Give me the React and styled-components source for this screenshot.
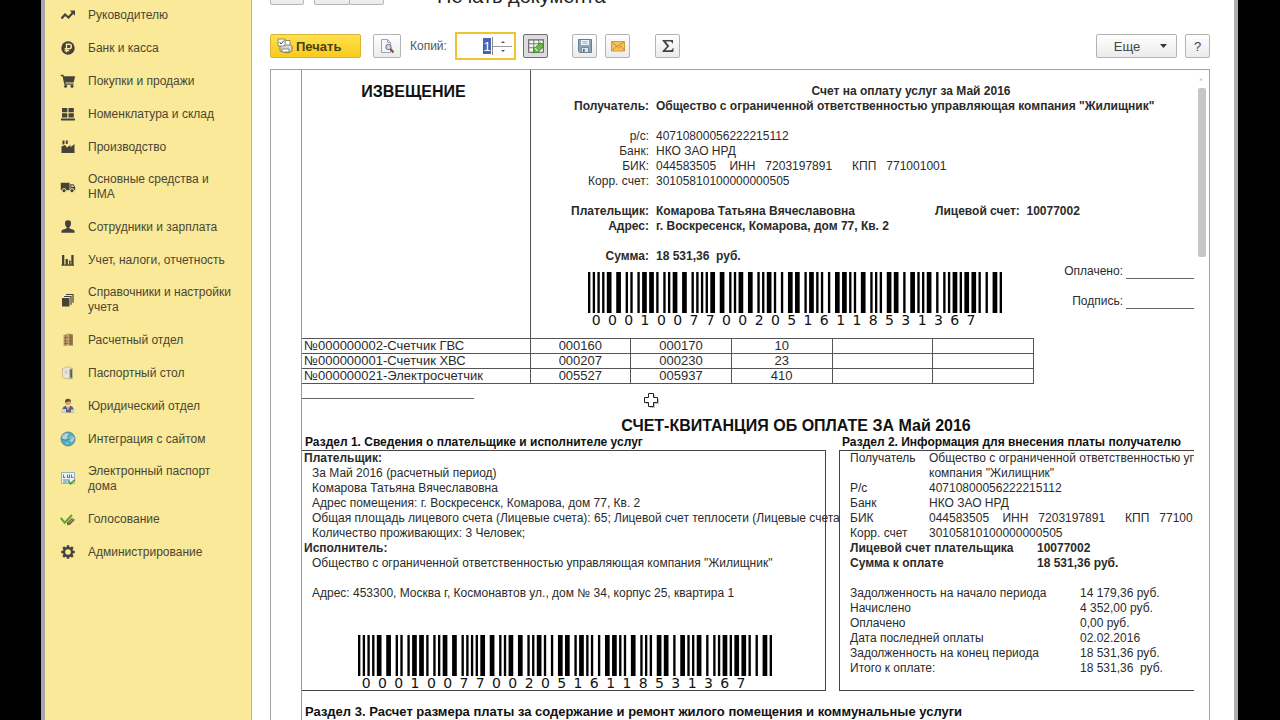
import { useState } from "react";
import styled, { createGlobalStyle, css } from "styled-components";

const GlobalStyle = createGlobalStyle`
  * {
    box-sizing: border-box;
  }
  body {
    margin: 0;
    background: #000;
    font-family: "Liberation Sans", Arial, sans-serif;
    font-size: 12px;
    color: #2b2b2b;
  }
  button, input {
    font-family: inherit;
  }
`;

const Screen = styled.div`
  height: 100vh;
  padding: 0 42px 0 41px;
  overflow: hidden;
`;

const AppWindow = styled.div`
  height: 100%;
  display: flex;
  background: #fff;
  border-left: 4px solid #a9a5ab;
  border-right: 4px solid #adadad;
  overflow: hidden;
`;

/* ---------- sidebar ---------- */

const Sidebar = styled.nav`
  flex: 0 0 207px;
  background: #f9e998;
  border-right: 1px solid #c9b76a;
`;

const MenuList = styled.ul`
  list-style: none;
  margin: -1px 0 0;
  padding: 0;
`;

const MenuLink = styled.a`
  display: flex;
  align-items: center;
  gap: 12px;
  min-height: 33px;
  padding: 8px 18px 9px 15px;
  font-size: 12px;
  line-height: 15px;
  color: #4b4634;
  text-decoration: none;

  svg {
    flex: 0 0 16px;
  }
`;

/* ---------- main pane ---------- */

const Main = styled.main`
  flex: 1;
  min-width: 0;
  display: flex;
  flex-direction: column;
  padding: 0 24px 0 18px;
`;

const TitleRow = styled.header`
  display: flex;
  align-items: center;
  height: 24px;
  margin-top: -19px;
`;

const Button = styled.button`
  display: flex;
  align-items: center;
  justify-content: center;
  width: ${(p) => p.$width || 25}px;
  height: 24px;
  padding: 0;
  border: 1px solid #b3b3b3;
  border-radius: 2px;
  background: linear-gradient(#fff, #ebebeb);
  color: #444;
  font-size: 13px;

  ${(p) => p.$primary && css`
    justify-content: flex-start;
    gap: 3px;
    padding-left: 6px;
    border-color: #d8b336;
    background: linear-gradient(#ffe04c, #f8cb1c);
    color: #4a411c;
    font-weight: bold;
  `}
  ${(p) => p.$pressed && css`
    border-color: #6f6f6f;
    background: #dcdcdc;
  `}
`;

const NavPair = styled.div`
  display: flex;
  margin-left: 10px;

  button + button {
    margin-left: -1px;
  }
`;

const Title = styled.h1`
  margin: 0 0 0 53px;
  padding-top: 6px;
  font-size: 20px;
  line-height: 24px;
  font-weight: normal;
  color: #222;
`;

const Toolbar = styled.div`
  display: flex;
  align-items: center;
  height: 28px;
  margin: 27px 0 9px;
`;

const Space = styled.span`
  flex: 0 0 ${(p) => p.$w}px;
`;

const Filler = styled.span`
  flex: 1;
`;

const CopiesLabel = styled.label`
  width: 45px;
  color: #555;
`;

const CopiesBox = styled.div`
  display: flex;
  justify-content: flex-end;
  align-items: center;
  width: 61px;
  height: 28px;
  padding-right: 2px;
  border: 2px solid #f0c52c;
  background: #fff;
`;

const CopiesInput = styled.input`
  width: 8px;
  height: 16px;
  padding: 0;
  border: 0;
  outline: 0;
  background: #4864b4;
  color: #fff;
  font-size: 13px;
  text-align: center;
`;

const Steppers = styled.div`
  display: flex;
  flex-direction: column;
  width: 20px;
  margin-left: 1px;
  border-left: 1px solid #888;
`;

const Step = styled.button`
  display: flex;
  align-items: center;
  justify-content: center;
  height: 9px;
  padding: 0;
  border: 0;
  background: none;

  & + & {
    border-top: 1px solid #999;
  }
`;

/* ---------- printed form ---------- */

const Viewer = styled.section`
  flex: 1;
  min-height: 0;
  display: flex;
  border: 1px solid #a0a0a0;
  border-bottom: 0;
`;

const Gutter = styled.div`
  flex: 0 0 30px;
`;

const Sheet = styled.article`
  position: relative;
  flex: 1;
  min-width: 0;
  border-left: 1px solid #999;
  line-height: 15px;
  white-space: nowrap;
  overflow: hidden;
`;

const ScrollTrack = styled.div`
  flex: 0 0 15px;
  padding: 7px 3px 0 4px;
`;

const ScrollThumb = styled.div`
  height: 169px;
  margin-top: 7px;
  border-radius: 2px;
  background: #c6c6c6;
`;

const Notice = styled.div`
  display: flex;
  height: 268px;
`;

const Stub = styled.div`
  flex: 0 0 229px;
  padding: 13px 5px 0 0;
  border-right: 1px solid #555;
`;

const StubTitle = styled.h2`
  margin: 0;
  font-size: 16px;
  line-height: 18px;
  text-align: center;
  color: #111;
`;

const NoticeBody = styled.div`
  flex: 1;
  padding-top: 14px;
`;

const NoticeTitle = styled.h3`
  width: 760px;
  margin: 0;
  font-size: 12px;
  line-height: 15px;
  text-align: center;
`;

const Line = styled.div`
  display: grid;
  grid-template-columns: ${(p) => p.$label}px 1fr;
  column-gap: ${(p) => p.$gap || 0}px;
  min-height: 15px;
  margin-top: ${(p) => (p.$after ? 15 : 0)}px;
  font-weight: ${(p) => (p.$bold ? "bold" : "normal")};
  white-space: pre;
`;

const RightLabel = styled.span`
  text-align: right;
`;

const Account = styled.span`
  display: inline-block;
  width: 279px;
`;

const PayRow = styled.div`
  display: flex;
  align-items: flex-start;
  padding-left: 57px;
`;

const BarcodeBox = styled.figure`
  flex: 0 0 414px;
  width: 414px;
  margin: ${(p) => p.$margin};

  svg {
    display: block;
    width: 100%;
    height: 41px;
  }
`;

const Digits = styled.figcaption`
  display: flex;
  padding-right: 23px;
  font-family: "DejaVu Sans", sans-serif;
  font-size: 14px;
  line-height: 15px;
  color: #111;

  span {
    flex: 1;
    text-align: center;
  }
`;

const Signatures = styled.div`
  margin-left: 61px;
`;

const Signature = styled.div`
  display: flex;
  height: 15px;
  margin-bottom: 15px;

  span {
    width: 60px;
    text-align: right;
  }
`;

const Blank = styled.div`
  width: ${(p) => p.$width}px;
  height: 15px;
  margin-left: ${(p) => p.$left || 0}px;
  border-bottom: 1px solid #666;
`;

const Meters = styled.table`
  width: 732px;
  table-layout: fixed;
  border-collapse: collapse;
  font-size: 13px;

  td {
    height: 15px;
    padding: 0;
    border: 1px solid #555;
    line-height: 14px;
    text-align: center;
  }
  td:first-child {
    width: 228px;
    padding-left: 2px;
    border-left: 0;
    text-align: left;
  }
`;

const BillTitle = styled.h2`
  width: 988px;
  margin: 17px 0 0;
  font-size: 16px;
  line-height: 19px;
  text-align: center;
  color: #111;
`;

const Columns = styled.div`
  display: flex;
  gap: 13px;
`;

const Part = styled.section`
  flex: 0 0 ${(p) => p.$width}px;
  min-width: 0;
`;

const PartTitle = styled.h3`
  margin: 0;
  padding-left: 3px;
  font-size: 12px;
  line-height: 15px;
  color: #111;
`;

const Frame = styled.div`
  height: 241px;
  padding-left: ${(p) => p.$pad}px;
  border: 1px solid #444;
  border-left-width: ${(p) => (p.$open ? 0 : 1)}px;
`;

const Row = styled.div`
  min-height: 15px;
  padding-left: ${(p) => (p.$bold ? 0 : 8)}px;
  font-weight: ${(p) => (p.$bold ? "bold" : "normal")};
`;

const LastTitle = styled(PartTitle)`
  margin-top: 13px;
  font-size: 13px;
`;

const Pointer = styled.svg`
  position: absolute;
  left: 341px;
  top: 322px;
`;

// interleaved 2 of 5: 1 = wide, 0 = narrow
const ITF = ["00110", "10001", "01001", "11000", "00101", "10100", "01100", "00011", "10010", "01010"];
const CODE = "000100770020516118531367";

function itfBars(code) {
  let widths = [1, 1, 1, 1];
  for (let i = 0; i < code.length; i += 2) {
    for (let k = 0; k < 5; k++) {
      widths.push(+ITF[code[i]][k] + 1, +ITF[code[i + 1]][k] + 1);
    }
  }
  widths = widths.concat([2, 1, 1]);
  let x = 0;
  const bars = [];
  widths.forEach((w, i) => {
    if (i % 2 === 0) bars.push({ x, w });
    x += w;
  });
  return { bars, total: x };
}

function Barcode({ margin }) {
  const { bars, total } = itfBars(CODE);
  return (
    <BarcodeBox $margin={margin}>
      <svg viewBox={`0 0 ${total} 10`} preserveAspectRatio="none">
        {bars.map((b) => <rect key={b.x} x={b.x} y="0" width={b.w} height="10" fill="#000" />)}
      </svg>
      <Digits>
        {CODE.split("").map((d, i) => <span key={i}>{d}</span>)}
      </Digits>
    </BarcodeBox>
  );
}

const Svg = ({ children, size = 16 }) => (
  <svg width={size} height={size} viewBox="0 0 16 16" fill="#45423a" aria-hidden="true">{children}</svg>
);

const icons = {
  trend: <><path d="M1.5 11.5 5 7.5 8.5 10.5 13 5.5" fill="none" stroke="#45423a" strokeWidth="2.2" /><path d="M9.8 3.5H15v5.2z" /></>,
  ruble: <><circle cx="8" cy="8" r="6.7" /><path d="M6.5 12.3V4.3h2.7a2.1 2.1 0 0 1 0 4.3H4.6M4.6 10.5h4.6" fill="none" stroke="#f9e998" strokeWidth="1.4" /></>,
  cart: <><path d="M.8 1.8h2.6l.5 1.4h11.2l-1.4 6.3H5.2l.3 1h8v1.2H4.3L2.6 3.2H.8z" /><circle cx="5.6" cy="13.3" r="1.5" /><circle cx="12" cy="13.3" r="1.5" /></>,
  boxes: <path d="M2 2h5.3v4.3H2zM8.5 2h5.3v4.3H8.5zM2 7.3h5.3v4.3H2zM8.5 7.3h5.3v4.3H8.5zM1 12.5h14v1.9H1z" />,
  factory: <path d="M1.5 14V7.5L5 6l2 2.5L10.5 6v2.2L14.5 5V14zM2.5 1.5h2V5l-2 .8zM5.8 1.5h2v3.3l-2 .2z" />,
  truck: <><path d="M.8 3.8h8.8v7.4H.8zM10.3 5.2h3l1.9 3v3h-4.900z" /><circle cx="4" cy="11.7" r="2.1" stroke="#f9e998" /><circle cx="12" cy="11.7" r="2.1" stroke="#f9e998" /><path d="M11.4 6.3h1.4l1 1.8h-2.4z" fill="#f9e998" /></>,
  person: <path d="M8 1.2a3 3 0 0 1 3 3.2C11 6 10.2 7.5 9.3 8.2v1.100l4.500 1.700c.6.3.8 1.400.8 2.700H1.400c0-1.300.2-2.400.8-2.700l4.500-1.700V8.200C5.800 7.500 5 6 5 4.400a3 3 0 0 1 3-3.200z" />,
  chart: <path d="M2 3h2.300v9.500H2zM5.600 7h2.300v5.500H5.600zM9 8.500h1.600v4H9zM11.300 3h2.300v9.500h-2.300zM1.500 12.500h12.500v1.300H1.500z" />,
  books: <><path d="M2 6h7.500v8.500H2z" /><path d="M4 4.500h7v8.300M6 2.500h7v8.300" fill="none" stroke="#45423a" strokeWidth="1.2" /></>,
  cabinet: <><path d="m3.500 3 5-1.500v12L3.500 14z" fill="#c0a271" /><path d="m8.500 1.500 4.500 1v11.300l-4.500-.3z" fill="#a3804f" /><path d="M4 6l4-.8M4 9h4M4 11.500h4M9.500 5.500h2.800M9.500 8.500h2.800M9.500 11.300h2.800M5.500 3v10.500M11 3v10" stroke="#7f6238" strokeWidth=".8" /></>,
  passport: <><path d="M2.500 3.500 9 1.700l2 1.200V14L4 13.300l-1.500-1z" fill="#ebe5d4" stroke="#b3a98d" strokeWidth=".7" /><path d="M9.500 4.500 12.500 3v11l-3-1z" fill="#8b8b78" /><path d="M4.500 5.500h3v3.500h-3z" fill="#d4d1c5" /><path d="m11 5 .3 7" stroke="#49493c" /></>,
  lawyer: <><path d="M2 14.500c0-4.500 1.500-6.500 4.500-7h3c3 .5 4.500 2.500 4.500 7z" fill="#55617a" /><path d="M1 11h5v3.800H1zM11 11.500h3.500v3H11z" fill="#cdd3da" /><path d="m6 7.300 2 6 2-6z" fill="#fff" /><path d="M7.500 8.500h1v4.500h-1z" fill="#b43a33" /><circle cx="8" cy="4.500" r="2.800" fill="#d3a16c" /><path d="M5 4.500C4.800 1.600 6.300.8 8 .8s3.200.8 3 3.700L9.500 3z" fill="#684023" /></>,
  globe: <><circle cx="8" cy="8" r="7" fill="#58a9bc" stroke="#447f8f" strokeWidth=".8" /><path d="M2.500 4.500 6 2l3 1-2 2.500 1 1.500-3 2-3-1.500zM9.500 6l4-1.500 1 3-2.500 4-2.500-2zM6 11l2 1-1 2z" fill="#a7d6d5" /><path d="M1.500 8c4 2 9 1 12-3" fill="none" stroke="#337c9b" strokeWidth=".8" /></>,
  epass: <><path d="M1.500 1.500h13v11h-13z" fill="#edf4f7" stroke="#78a3bd" strokeWidth=".8" /><path d="M3.500 3.500v3h2m2-3v3h2v-3m2 0v3h2M3 9h7M3 11h4" fill="none" stroke="#4b83ae" strokeWidth="1.1" /><path d="m7.500 10.500 3 3.500 5-5-1.300-.8-3.500 3.200-1.700-2z" fill="#4ba02b" /></>,
  vote: <><path d="m.8 7 4 4.800L12 4" fill="none" stroke="#52a72e" strokeWidth="2" /><path d="m7 11.500 5-4.500 3 1.800-5 5-3 .4z" fill="#6e6144" /><path d="m8.500 12 5-4" stroke="#d0c28e" strokeWidth=".8" /></>,
  gear: <><circle cx="8" cy="8" r="4" fill="none" stroke="#45423a" strokeWidth="2.4" /><path d="M8 1.200v2.500M8 12.300v2.500M1.200 8h2.500M12.300 8h2.500M3.200 3.200 5 5M11 11l1.800 1.800M3.200 12.800 5 11M11 5l1.800-1.800" stroke="#45423a" strokeWidth="2.6" /></>,
};

const menu = [
  ["trend", "Руководителю"],
  ["ruble", "Банк и касса"],
  ["cart", "Покупки и продажи"],
  ["boxes", "Номенклатура и склад"],
  ["factory", "Производство"],
  ["truck", "Основные средства и НМА"],
  ["person", "Сотрудники и зарплата"],
  ["chart", "Учет, налоги, отчетность"],
  ["books", "Справочники и настройки учета"],
  ["cabinet", "Расчетный отдел"],
  ["passport", "Паспортный стол"],
  ["lawyer", "Юридический отдел"],
  ["globe", "Интеграция с сайтом"],
  ["epass", "Электронный паспорт дома"],
  ["vote", "Голосование"],
  ["gear", "Администрирование"],
];

const meters = [
  ["№000000002-Счетчик ГВС", "000160", "000170", "10", "", ""],
  ["№000000001-Счетчик ХВС", "000207", "000230", "23", "", ""],
  ["№000000021-Электросчетчик", "005527", "005937", "410", "", ""],
];

const REQUISITES = "044583505    ИНН   7203197891      КПП   771001001";

const noticeLines = [
  { label: "Получатель:", value: 'Общество с ограниченной ответственностью управляющая компания "Жилищник"', bold: true },
  { label: "р/с:", value: "40710800056222215112", after: true },
  { label: "Банк:", value: "НКО ЗАО НРД" },
  { label: "БИК:", value: REQUISITES },
  { label: "Корр. счет:", value: "30105810100000000505" },
  { label: "Плательщик:", value: <><Account>Комарова Татьяна Вячеславовна</Account>{"Лицевой счет:  10077002"}</>, bold: true, after: true },
  { label: "Адрес:", value: "г. Воскресенск, Комарова, дом 77, Кв. 2", bold: true },
  { label: "Сумма:", value: "18 531,36  руб.", bold: true, after: true },
];

const payeeLines = [
  { label: "Получатель", value: 'Общество с ограниченной ответственностью управляющая\nкомпания "Жилищник"', w: 79 },
  { label: "Р/с", value: "40710800056222215112", w: 79 },
  { label: "Банк", value: "НКО ЗАО НРД", w: 79 },
  { label: "БИК", value: REQUISITES, w: 79 },
  { label: "Корр. счет", value: "30105810100000000505", w: 79 },
  { label: "Лицевой счет плательщика", value: "10077002", w: 187, bold: true },
  { label: "Сумма к оплате", value: "18 531,36 руб.", w: 187, bold: true },
  { label: "Задолженность на начало периода", value: "14 179,36 руб.", w: 230, after: true },
  { label: "Начислено", value: "4 352,00 руб.", w: 230 },
  { label: "Оплачено", value: "0,00 руб.", w: 230 },
  { label: "Дата последней оплаты", value: "02.02.2016", w: 230 },
  { label: "Задолженность на конец периода", value: "18 531,36 руб.", w: 230 },
  { label: "Итого к оплате:", value: "18 531,36  руб.", w: 230 },
];

function PrintToolbar() {
  const [copies, setCopies] = useState("1");
  const change = (d) => setCopies(String(Math.max(1, Number(copies) + d)));

  return (
    <Toolbar>
      <Button $primary $width={91}>
        <Svg>
          <path d="M4 6h9l2 2v5l-4 2-8-2V8z" fill="#d9d8cf" stroke="#6d6958" strokeWidth=".8" />
          <path d="M5 11h7v3H5z" fill="#fff" stroke="#77725e" strokeWidth=".8" />
          <path d="M1 1h7v7H1zM8.500 2.500H13V7H8.500" fill="#fff" stroke="#77725e" strokeWidth=".8" />
          <path d="m2.500 4 1.500 2 3-3.500" fill="none" stroke="#4c4c4c" />
        </Svg>
        Печать
      </Button>
      <Space $w={12} />
      <Button $width={28} aria-label="Просмотр">
        <Svg>
          <path d="M2.500 1.500h6l3 3v10h-9z" fill="#f8f8fa" stroke="#9ba3b6" />
          <path d="M8.500 1.500v3h3" fill="none" stroke="#9ba3b6" />
          <circle cx="9.500" cy="9" r="2.700" fill="#cfd5df" stroke="#697080" />
          <path d="m11.500 11 3 3.500" stroke="#874e48" strokeWidth="2" />
        </Svg>
      </Button>
      <Space $w={9} />
      <CopiesLabel htmlFor="copies">Копий:</CopiesLabel>
      <CopiesBox>
        <CopiesInput id="copies" value={copies} onChange={(e) => setCopies(e.target.value)} />
        <Steppers>
          <Step aria-label="Больше" onClick={() => change(1)}>
            <svg width="4" height="2" viewBox="0 0 4 2"><path d="M0 2h4L2 0z" fill="#555" /></svg>
          </Step>
          <Step aria-label="Меньше" onClick={() => change(-1)}>
            <svg width="4" height="2" viewBox="0 0 4 2"><path d="M0 0h4L2 2z" fill="#555" /></svg>
          </Step>
        </Steppers>
      </CopiesBox>
      <Space $w={7} />
      <Button $pressed aria-label="Редактирование">
        <Svg size={18}>
          <path d="M1.500 2.500h13v11h-13z" fill="#f7f7f5" stroke="#616161" />
          <path d="M1.500 6h13M1.500 9.500h13M6 2.500v11M10.500 2.500v11" stroke="#777" strokeWidth=".9" />
          <path d="m5.500 14 1-4 5.500-5 3 3-5.500 5.500z" fill="#66b943" stroke="#39831f" strokeWidth=".8" />
          <path d="m7 10 2.500 2.500" stroke="#d9f2cc" />
        </Svg>
      </Button>
      <Space $w={24} />
      <Button aria-label="Сохранить">
        <Svg>
          <path d="M1.500 1.500h13v13h-12l-1-1z" fill="#8ba6bb" stroke="#657e92" />
          <path d="M4 2h8v5H4z" fill="#eef3f6" />
          <path d="M4.500 9.500h7v5h-7z" fill="#dfe6eb" stroke="#657e92" strokeWidth=".8" />
          <path d="M5.500 3.700h5M5.500 5.300h5" stroke="#8ba6bb" strokeWidth=".8" />
          <path d="M6 11h1.700v3H6z" fill="#4f6e86" />
        </Svg>
      </Button>
      <Space $w={8} />
      <Button aria-label="Отправить">
        <Svg>
          <path d="M1.500 3.500h13v9.500h-13z" fill="#f4c25d" stroke="#d39a35" />
          <path d="m2 12.500 4.500-4.300L8.500 10l2.300-2 3.700 4.500M2 4l5 4.500L14 4" fill="none" stroke="#c7862a" strokeWidth=".9" />
        </Svg>
      </Button>
      <Space $w={25} />
      <Button aria-label="Сумма">
        <Svg>
          <path d="M2.500 2h10.500v3.300h-1C11.800 4 11.300 3.400 10 3.400H5.700L9.300 8 5.400 12.300h5c1.300 0 2-.7 2.300-2h1l-.5 3.700H2.500v-1L7 8.200 2.500 2.800z" fill="#444" />
        </Svg>
      </Button>
      <Filler />
      <Button $width={81}>
        <Space $w={8} />
        Еще
        <Space $w={20} />
        <svg width="7" height="4" viewBox="0 0 7 4"><path d="M0 0h7L3.500 4z" fill="#333" /></svg>
      </Button>
      <Space $w={8} />
      <Button aria-label="Справка">?</Button>
    </Toolbar>
  );
}

function PaymentNotice() {
  return (
    <Notice>
      <Stub>
        <StubTitle>ИЗВЕЩЕНИЕ</StubTitle>
      </Stub>
      <NoticeBody>
        <NoticeTitle>Счет на оплату услуг за Май 2016</NoticeTitle>
        {noticeLines.map((l) => (
          <Line key={l.label} $label={118} $gap={7} $bold={l.bold} $after={l.after}>
            <RightLabel>{l.label}</RightLabel>
            <span>{l.value}</span>
          </Line>
        ))}
        <PayRow>
          <Barcode margin="8px 0 0" />
          <Signatures>
            <Signature><span>Оплачено:</span><Blank $width={90} $left={3} /></Signature>
            <Signature><span>Подпись:</span><Blank $width={90} $left={3} /></Signature>
          </Signatures>
        </PayRow>
      </NoticeBody>
    </Notice>
  );
}

function Bill() {
  return (
    <>
      <BillTitle>СЧЕТ-КВИТАНЦИЯ ОБ ОПЛАТЕ ЗА Май 2016</BillTitle>
      <Columns>
        <Part $width={524}>
          <PartTitle>Раздел 1. Сведения о плательщике и исполнителе услуг</PartTitle>
          <Frame $pad={2} $open>
            <Row $bold>Плательщик:</Row>
            <Row>За Май 2016 (расчетный период)</Row>
            <Row>Комарова Татьяна Вячеславовна</Row>
            <Row>Адрес помещения: г. Воскресенск, Комарова, дом 77, Кв. 2</Row>
            <Row>Общая площадь лицевого счета (Лицевые счета): 65; Лицевой счет теплосети (Лицевые счета</Row>
            <Row>Количество проживающих: 3 Человек;</Row>
            <Row $bold>Исполнитель:</Row>
            <Row>Общество с ограниченной ответственностью управляющая компания "Жилищник"</Row>
            <Row />
            <Row>Адрес: 453300, Москва г, Космонавтов ул., дом № 34, корпус 25, квартира 1</Row>
            <Barcode margin="34px 0 0 54px" />
          </Frame>
        </Part>
        <Part $width={524}>
          <PartTitle>Раздел 2. Информация для внесения платы получателю</PartTitle>
          <Frame $pad={10}>
            {payeeLines.map((l) => (
              <Line key={l.label} $label={l.w} $bold={l.bold} $after={l.after}>
                <span>{l.label}</span>
                <span>{l.value}</span>
              </Line>
            ))}
          </Frame>
        </Part>
      </Columns>
      <LastTitle>Раздел 3. Расчет размера платы за содержание и ремонт жилого помещения и коммунальные услуги</LastTitle>
    </>
  );
}

function App() {
  return (
    <Screen>
      <GlobalStyle />
      <AppWindow>
        <Sidebar>
          <MenuList>
            {menu.map(([icon, text]) => (
              <li key={icon}>
                <MenuLink href="#">
                  <Svg>{icons[icon]}</Svg>
                  <span>{text}</span>
                </MenuLink>
              </li>
            ))}
          </MenuList>
        </Sidebar>
        <Main>
          <TitleRow>
            <Button $width={34} aria-label="Домой" />
            <NavPair>
              <Button $width={36} aria-label="Назад" />
              <Button $width={35} aria-label="Вперед" />
            </NavPair>
            <Title>Печать документа</Title>
          </TitleRow>
          <PrintToolbar />
          <Viewer>
            <Gutter />
            <Sheet>
              <PaymentNotice />
              <Meters>
                <tbody>
                  {meters.map((row) => (
                    <tr key={row[0]}>
                      {row.map((cell, i) => <td key={i}>{cell}</td>)}
                    </tr>
                  ))}
                </tbody>
              </Meters>
              <Blank $width={172} />
              <Bill />
              <Pointer width="18" height="18" viewBox="0 0 18 18">
                <path d="M7 3h5v4h4v5h-4v4H7v-4H3V7h4z" fill="#999" opacity=".6" />
                <path d="M5.500 1.500h5v4h4v5h-4v4h-5v-4h-4v-5h4z" fill="#fff" stroke="#222" />
              </Pointer>
            </Sheet>
            <ScrollTrack>
              <svg width="6" height="4" viewBox="0 0 6 4" display="block"><path d="M1 3.500h4L3 1z" fill="#ccc" /></svg>
              <ScrollThumb />
            </ScrollTrack>
          </Viewer>
        </Main>
      </AppWindow>
    </Screen>
  );
}

export default App;
